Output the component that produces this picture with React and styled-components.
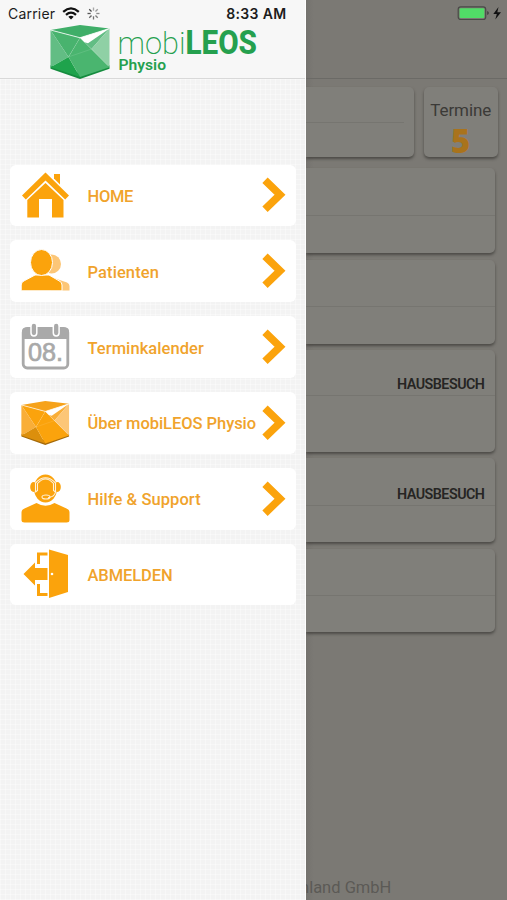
import React from "react";
import styled, { createGlobalStyle } from "styled-components";

const ORANGE = "#fba30c";

const GlobalStyle = createGlobalStyle`
  * { box-sizing: border-box; }
  body { margin: 0; background: #7b7974; font-family: Roboto, "Liberation Sans", sans-serif; }
`;

const Screen = styled.div`
  display: flex;
  width: 507px;
  height: 900px;
  overflow: hidden;
`;

const Drawer = styled.aside`
  flex: 0 0 306.4px;
  height: 900px;
  border-right: 1px solid #fff;
  background-color: #f3f3f3;
  background-image:
    repeating-linear-gradient(0deg, rgba(255, 255, 255, 0.35) 0 1px, transparent 1px 5px),
    repeating-linear-gradient(90deg, rgba(255, 255, 255, 0.35) 0 1px, transparent 1px 5px);
`;

const DrawerHeader = styled.header`
  height: 79px;
  background: #f7f7f7;
  border-bottom: 1px solid #d9d9d9;
`;

const StatusBar = styled.div`
  display: flex;
  align-items: center;
  height: 25px;
  padding: 1px 19px 0 8px;
  font-family: Inter, "Liberation Sans", sans-serif;
  font-size: 14px;
  color: #1c1c1c;
  svg { display: block; }
`;

const Carrier = styled.span`
  width: 48px;
  margin-right: 6px;
  letter-spacing: 0.2px;
  white-space: nowrap;
`;

const SpinnerSlot = styled.span`
  margin-left: 7px;
`;

const Clock = styled.span`
  margin-left: auto;
  font-weight: 600;
  letter-spacing: 0.32px;
  white-space: nowrap;
`;

const Logo = styled.div`
  display: flex;
  padding-left: 50px;
  svg { display: block; flex: none; }
`;

const Menu = styled.nav`
  display: flex;
  flex-direction: column;
  gap: 14px;
  padding: 85.6px 9px 0 10px;
`;

const MenuItem = styled.a`
  display: flex;
  align-items: center;
  height: 61.8px;
  padding: 0 10px 0 11px;
  border-radius: 6px;
  background: #fff;
  color: #f0a32c;
`;

const IconBox = styled.span`
  flex: 0 0 50px;
  height: 50px;
  svg { display: block; }
`;

const Label = styled.span`
  flex: 1;
  min-width: 0;
  margin-left: 16.5px;
  padding-top: 2px;
  font-size: 16.5px;
  font-weight: 500;
  letter-spacing: ${(p) => p.$spacing}px;
  white-space: nowrap;
`;

const Main = styled.main`
  flex: 1;
  display: flex;
  flex-direction: column;
  min-width: 0;
  height: 900px;
  overflow: hidden;
  background: linear-gradient(90deg, #75736f, #7b7974 8px);
`;

const MainHeader = styled.header`
  display: flex;
  flex: 0 0 79px;
  justify-content: flex-end;
  align-items: flex-start;
  padding: 6px 4px 0 0;
  border-bottom: 1px solid #6b6a66;
`;

const TopCards = styled.div`
  display: flex;
  gap: 10px;
  padding: 8px 9.5px 0 0;
  height: 78px;
`;

const Card = styled.section`
  background: #807f7a;
  border-radius: 0 5px 5px 0;
  box-shadow: 0 2px 3px rgba(45, 44, 40, 0.6);
`;

const SummaryCard = styled(Card)`
  flex: 1;
  padding: 35px 10px 0 0;
`;

const CountCard = styled(Card)`
  flex: 0 0 73.5px;
  border-radius: 5px;
  padding-top: 13px;
  text-align: center;
`;

const CountTitle = styled.div`
  font-size: 17px;
  line-height: 21px;
  color: #3b3a37;
  letter-spacing: -0.05px;
`;

const CountValue = styled.div`
  margin-top: 2.5px;
  font: 800 33px/34px "Open Sans", sans-serif;
  color: #a9731c;
`;

const Divider = styled.div`
  height: 1px;
  background: #767570;
`;

const List = styled.div`
  display: flex;
  flex-direction: column;
  gap: 6.5px;
  padding: 11px 12px 0 0;
`;

const Appointment = styled(Card)`
  height: ${(p) => p.$height}px;
`;

const AppointmentHead = styled.div`
  display: flex;
  justify-content: flex-end;
  align-items: flex-end;
  height: ${(p) => p.$height}px;
  padding: 0 10.5px ${(p) => p.$bottom}px 0;
  font-size: 14.3px;
  font-weight: 600;
  line-height: 14px;
  color: #262523;
  letter-spacing: -0.5px;
`;

const Footer = styled.footer`
  display: flex;
  justify-content: flex-end;
  width: 85px;
  margin-top: auto;
  padding-bottom: 2px;
  font-size: 16.5px;
  line-height: 20px;
  color: #5b5a56;
  white-space: nowrap;
  overflow: hidden;
`;

const greens = { top: "#3fae68", left: "#62bd84", mid: "#48b36e", right: "#8fd0a5", deep: "#1fa34c", low: "#4ab56f", edge: "#168c3f" };
const oranges = { top: "#f6a21a", left: "#f9ae38", mid: "#fba30c", right: "#fcc677", deep: "#dc8f0c", low: "#fba30c", edge: "#a46a0b" };

function Cube({ c, width, height }) {
  return (
    <svg width={width} height={height} viewBox="0 0 60 55" preserveAspectRatio="none">
      <path d="M.5 41 30 49 59.500 41v3.500L30 55 .5 44.500Z" fill={c.edge} />
      <path d="M.5 5 30 0 59.500 3.500 30 13Z" fill={c.top} />
      <path d="M.5 5 30 13 18.500 32.500Z" fill={c.mid} />
      <path d="M.5 5 18.500 32.500 .5 43Z" fill={c.left} />
      <path d="M.5 43 18.500 32.500 30 53Z" fill={c.deep} />
      <path d="M30 13 59.500 43 30 53 18.500 32.500Z" fill={c.low} />
      <path d="M30 13 59.500 3.500 41.500 24.500Z" fill={c.left} />
      <path d="M59.500 3.500V43L41.500 24.500Z" fill={c.right} />
      <path d="M30 13 59.500 3.500 38 18.500 34.500 17.500Z" fill="#fff" />
      <path d="M.5 5 30 13 59.500 3.500" fill="none" stroke="#fff" strokeOpacity=".75" strokeWidth="1.100" />
      <path d="M30 13 18.500 32.500M41.500 24.500 18.500 32.500" fill="none" stroke="#fff" strokeOpacity=".15" strokeWidth=".8" />
    </svg>
  );
}

function Wordmark() {
  return (
    <svg width="160" height="54" viewBox="0 0 160 54" fill="#25a04e">
      <text x="7.500" y="28.500" fontFamily="Roboto" fontWeight="200" fontSize="32" textLength="68" lengthAdjust="spacingAndGlyphs">mobi</text>
      <text x="75.500" y="28.500" fontFamily="Roboto" fontWeight="800" fontSize="32.500" textLength="71.500" lengthAdjust="spacingAndGlyphs">LEOS</text>
      <text x="8.500" y="44.500" fontFamily="Roboto" fontWeight="600" fontSize="15.500" textLength="47.500" lengthAdjust="spacingAndGlyphs">Physio</text>
    </svg>
  );
}

function WifiIcon() {
  return (
    <svg width="18" height="13" viewBox="0 0 18 13" fill="none" stroke="#111" strokeWidth="2.300">
      <path d="M1.200 4.800Q9-2 16.800 4.800M4 7.800q5-4.300 10 0" />
      <path d="M6.300 9.800Q9 7.600 11.700 9.800L9 12.600Z" fill="#111" stroke="none" />
    </svg>
  );
}

const SPOKES = [0, 45, 90, 135, 180, 225, 270, 315];

function Spinner() {
  return (
    <svg width="13" height="13" viewBox="-6.5 -6.5 13 13">
      {SPOKES.map((a, i) => (
        <path key={a} d="M0-2.800V-6" transform={`rotate(${a})`} stroke="#333" strokeWidth="1.300" opacity={0.4 + i * 0.07} />
      ))}
    </svg>
  );
}

function HomeIcon() {
  return (
    <svg width="50" height="50" viewBox="0 0 50 50" fill={ORANGE}>
      <path d="M33 4h6v10.500l-6-6Z" />
      <path d="M24.500 2.500 48 25.500l-3.800 4L24.500 10.500 4.800 29.500 1 25.500Z" />
      <path d="M24.500 13 42.500 30v17.500H31V29H18v18.500H6.300V30Z" />
    </svg>
  );
}

function PatientsIcon() {
  return (
    <svg width="50" height="50" viewBox="0 0 50 50">
      <g fill="#fcc677">
        <ellipse cx="30.500" cy="18" rx="9.500" ry="9.500" />
        <path d="M30 31 46 36.500q2.500 1 2.500 3.500v4.500H30Z" />
      </g>
      <g fill={ORANGE} stroke="#fff" strokeWidth="1">
        <path d="M.2 44.800V39q0-3 3-4.200L14 29h14L38 34.800q3 1.200 3 4.200v5.800Z" />
        <ellipse cx="20.500" cy="16.500" rx="11" ry="13" />
      </g>
    </svg>
  );
}

function CalendarIcon() {
  return (
    <svg width="50" height="50" viewBox="0 0 50 50">
      <rect x="2.200" y="6.500" width="44.600" height="39.500" rx="4" fill="#fff" stroke="#a9a9a9" strokeWidth="2.800" />
      <path d="M1 17V9.500q0-4 4-4h39q4 0 4 4V17Z" fill="#a9a9a9" />
      <g fill="#a9a9a9" stroke="#fff" strokeWidth="1.500">
        <rect x="10" y="1" width="5.800" height="13" rx="2.900" />
        <rect x="32.300" y="1" width="5.800" height="13" rx="2.900" />
      </g>
      <text x="7" y="38.500" fontFamily="Liberation Sans" fontSize="25" fill="#a9a9a9" stroke="#a9a9a9" strokeWidth=".7" textLength="35" lengthAdjust="spacingAndGlyphs">08.</text>
    </svg>
  );
}

function AboutIcon() {
  return (
    <svg width="50" height="50" viewBox="0 0 50 50">
      <g transform="translate(0 3)"><Cube c={oranges} width="48.500" height="44" /></g>
    </svg>
  );
}

function SupportIcon() {
  return (
    <svg width="50" height="50" viewBox="0 0 50 50" fill={ORANGE}>
      <path d="M.5 46V38.500q0-2.800 3-4L15.500 29q9 5.500 18 0l12 5.500q3 1.200 3 4V46q0 2.500-3 2.500h-42Q.5 48.500.5 46Z" />
      <ellipse cx="24.500" cy="14.500" rx="11.500" ry="14" />
      <ellipse cx="12.500" cy="13" rx="3.300" ry="5" />
      <ellipse cx="36.500" cy="13" rx="3.300" ry="5" />
      <g fill="none" stroke="#fff" strokeOpacity=".85" strokeWidth="1.100" strokeLinecap="round">
        <path d="M14.500 18V9Q24.500-1.500 34.500 9v9M14.500 18l2-1.500V9.500M34.500 18l-2-1.500V9.500M16.500 9.500q8-9 16 0M34.500 18q-1 5-7 5.500" />
        <ellipse cx="25" cy="23" rx="4" ry="2" />
      </g>
    </svg>
  );
}

function LogoutIcon() {
  return (
    <svg width="50" height="50" viewBox="0 0 50 50" fill={ORANGE}>
      <path d="M28 .5v48.500l19-6V6Z" />
      <circle cx="31" cy="25" r="1.300" fill="#fff" />
      <path d="M2.500 25 14 13.500V19h12.500v12H14v5.500Z" />
      <path d="M16 15V3.500h10.500v3H19V15ZM16 35h3v9h7.500v3H16Z" />
    </svg>
  );
}

function Chevron() {
  return (
    <svg width="24" height="36" viewBox="0 0 24 36" fill="none" stroke={ORANGE} strokeWidth="7.600">
      <path d="M3 3.200 18 17.700 3 32.200" />
    </svg>
  );
}

function Battery() {
  return (
    <svg width="46" height="15" viewBox="0 0 46 15">
      <rect x="1.200" y=".9" width="27.500" height="12.600" rx="2.500" fill="none" stroke="#4a4a47" strokeWidth="1.200" />
      <rect x="2.600" y="2.300" width="24.700" height="9.800" rx="1" fill="#51dc67" />
      <path d="M30 5q2 .5 2 2t-2 2Z" fill="#4a4a47" />
      <path d="M41.500 1 36.300 8h3.500L38.300 13.500 44 6.200h-3.700Z" fill="#111" />
    </svg>
  );
}

const MENU = [
  { label: "HOME", Icon: HomeIcon, spacing: -0.3, arrow: true },
  { label: "Patienten", Icon: PatientsIcon, spacing: 0.1, arrow: true },
  { label: "Terminkalender", Icon: CalendarIcon, spacing: 0.07, arrow: true },
  { label: "Über mobiLEOS Physio", Icon: AboutIcon, spacing: -0.05, arrow: true },
  { label: "Hilfe & Support", Icon: SupportIcon, spacing: 0.07, arrow: true },
  { label: "ABMELDEN", Icon: LogoutIcon, spacing: -0.1, arrow: false },
];

const APPOINTMENTS = [
  { height: 85, head: 47 },
  { height: 84, head: 46 },
  { height: 101.5, head: 45, tag: "HAUSBESUCH", bottom: 4 },
  { height: 84, head: 47, tag: "HAUSBESUCH", bottom: 4.5 },
  { height: 83, head: 46 },
];

export default function App() {
  return (
    <Screen>
      <GlobalStyle />
      <Drawer>
        <DrawerHeader>
          <StatusBar>
            <Carrier>Carrier</Carrier>
            <WifiIcon />
            <SpinnerSlot><Spinner /></SpinnerSlot>
            <Clock>8:33 AM</Clock>
          </StatusBar>
          <Logo>
            <Cube c={greens} width={60} height={54} />
            <Wordmark />
          </Logo>
        </DrawerHeader>
        <Menu>
          {MENU.map(({ label, Icon, spacing, arrow }) => (
            <MenuItem key={label}>
              <IconBox><Icon /></IconBox>
              <Label $spacing={spacing}>{label}</Label>
              {arrow && <Chevron />}
            </MenuItem>
          ))}
        </Menu>
      </Drawer>
      <Main>
        <MainHeader><Battery /></MainHeader>
        <TopCards>
          <SummaryCard><Divider /></SummaryCard>
          <CountCard>
            <CountTitle>Termine</CountTitle>
            <CountValue>5</CountValue>
          </CountCard>
        </TopCards>
        <List>
          {APPOINTMENTS.map((a, i) => (
            <Appointment key={i} $height={a.height}>
              <AppointmentHead $height={a.head} $bottom={a.bottom || 0}>{a.tag}</AppointmentHead>
              <Divider />
            </Appointment>
          ))}
        </List>
        <Footer>hland GmbH</Footer>
      </Main>
    </Screen>
  );
}
